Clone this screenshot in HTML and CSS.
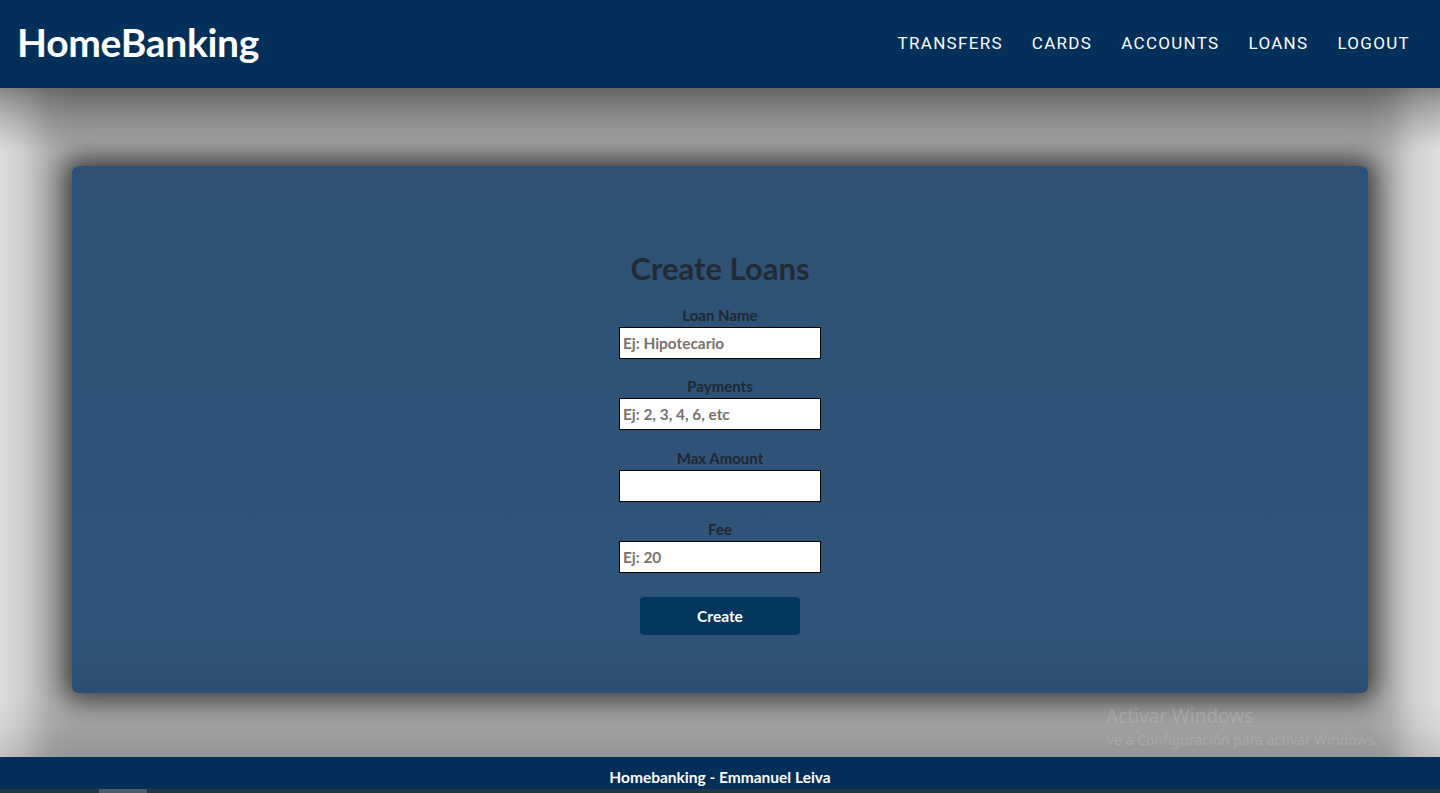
FILE: index.html
```html
<!DOCTYPE html>
<html lang="es">
<head>
<meta charset="utf-8">
<title>HomeBanking</title>
<link rel="stylesheet" href="styles.css">
</head>
<body>
<header class="topbar">
  <div class="brand">HomeBanking</div>
  <nav class="nav">
    <a href="#">TRANSFERS</a>
    <a href="#">CARDS</a>
    <a href="#">ACCOUNTS</a>
    <a href="#">LOANS</a>
    <a href="#">LOGOUT</a>
  </nav>
</header>
<main class="main">
  <section class="card">
    <h1 class="title">Create Loans</h1>
    <form class="form">
      <div class="field">
        <label class="label">Loan Name</label>
        <input class="input" type="text" placeholder="Ej: Hipotecario">
      </div>
      <div class="field">
        <label class="label">Payments</label>
        <input class="input" type="text" placeholder="Ej: 2, 3, 4, 6, etc">
      </div>
      <div class="field">
        <label class="label">Max Amount</label>
        <input class="input" type="text">
      </div>
      <div class="field">
        <label class="label">Fee</label>
        <input class="input" type="text" placeholder="Ej: 20">
      </div>
      <button class="btn" type="button">Create</button>
    </form>
  </section>
  <div class="watermark">
    <div class="wm-title">Activar Windows</div>
    <div class="wm-sub">Ve a Configuración para activar Windows.</div>
  </div>
</main>
<footer class="footer">Homebanking - Emmanuel Leiva</footer>
<div class="taskbar"><span class="taskbar-item"></span></div>
</body>
</html>
```
FILE: styles.css
```css
* { box-sizing: border-box; }
html, body { margin: 0; padding: 0; }
body {
  width: 1440px;
  height: 793px;
  overflow: hidden;
  background: #e0dfde;
  font-family: "Lato", "Open Sans", sans-serif;
  display: flex;
  flex-direction: column;
}
.topbar {
  height: 88px;
  flex: none;
  background: #03305a;
  display: flex;
  align-items: center;
  justify-content: space-between;
  padding: 0 30px 0 17px;
  position: relative;
  z-index: 3;
}
.brand {
  color: #fff;
  font-family: "Lato", sans-serif;
  font-weight: 700;
  font-size: 39px;
  letter-spacing: -0.3px;
  margin-top: -4px;
}
.nav {
  display: flex;
  gap: 29px;
  margin-top: -2px;
}
.nav a {
  color: #fff;
  text-decoration: none;
  font-family: "Roboto", "Liberation Sans", sans-serif;
  font-size: 17px;
  letter-spacing: 1.3px;
}
.main {
  flex: 1;
  position: relative;
  overflow: hidden;
  padding-top: 78px;
  background:
    linear-gradient(to bottom, rgba(0,0,0,0.4) 0px, rgba(0,0,0,0.29) 12px, rgba(0,0,0,0.16) 32px, rgba(0,0,0,0.05) 52px, rgba(0,0,0,0) 64px),
    linear-gradient(to top, rgba(0,0,0,0.12) 0px, rgba(0,0,0,0.04) 30px, rgba(0,0,0,0) 60px),
    linear-gradient(to right, #dedddb 0px, #cfcecd 22px, #b0afaf 50px, #a9a8a8 72px, #a9a8a8 1368px, #b3b2b2 1390px, #d3d2d1 1415px, #e0dfde 1440px);
}
.card {
  margin: 0 72px;
  height: 527px;
  background: linear-gradient(#2e5175, #30557a 88%, #2d4e70);
  border-radius: 6px;
  box-shadow: 0 0 26px 8px rgba(35, 35, 35, 0.8);
  display: flex;
  flex-direction: column;
  align-items: center;
  padding-top: 83px;
}
.title {
  margin: 0;
  font-family: "Lato", sans-serif;
  font-weight: 700;
  font-size: 31px;
  line-height: 38px;
  color: #222a33;
}
.form {
  display: flex;
  flex-direction: column;
  align-items: center;
  margin-top: 19px;
}
.field {
  display: flex;
  flex-direction: column;
  align-items: center;
  gap: 3px;
  margin-bottom: 18.4px;
}
.label {
  font-weight: 700;
  font-size: 15px;
  line-height: 18px;
  color: #1f2730;
}
.input {
  width: 202px;
  height: 32px;
  border: 1px solid #000;
  background: #fff;
  padding: 0 3px;
  font-family: "Lato", sans-serif;
  font-weight: 700;
  font-size: 15.4px;
  color: #333;
  outline: none;
}
.input::placeholder {
  color: #77726e;
  opacity: 1;
}
.btn {
  margin-top: 5px;
  width: 160px;
  height: 38px;
  border: none;
  border-radius: 4px;
  background: #03375d;
  color: #fff;
  font-family: "Lato", sans-serif;
  font-weight: 700;
  font-size: 15.5px;
}
.watermark {
  position: absolute;
  left: 1106px;
  top: 615px;
  color: rgba(190, 190, 190, 0.4);
  font-family: "Noto Sans", "Open Sans", sans-serif;
  pointer-events: none;
}
.wm-title { font-size: 19px; line-height: 27px; }
.wm-sub { font-size: 14px; line-height: 20px; }
.footer {
  height: 32px;
  flex: none;
  background: #03305a;
  color: #fff;
  font-weight: 700;
  font-size: 15.5px;
  display: flex;
  align-items: center;
  justify-content: center;
  padding-top: 8px;
  position: relative;
  z-index: 3;
}
.taskbar {
  height: 4px;
  flex: none;
  background: #23363f;
  position: relative;
}
.taskbar-item {
  position: absolute;
  left: 99px;
  top: 0;
  width: 48px;
  height: 4px;
  background: #4d5c63;
}
```
